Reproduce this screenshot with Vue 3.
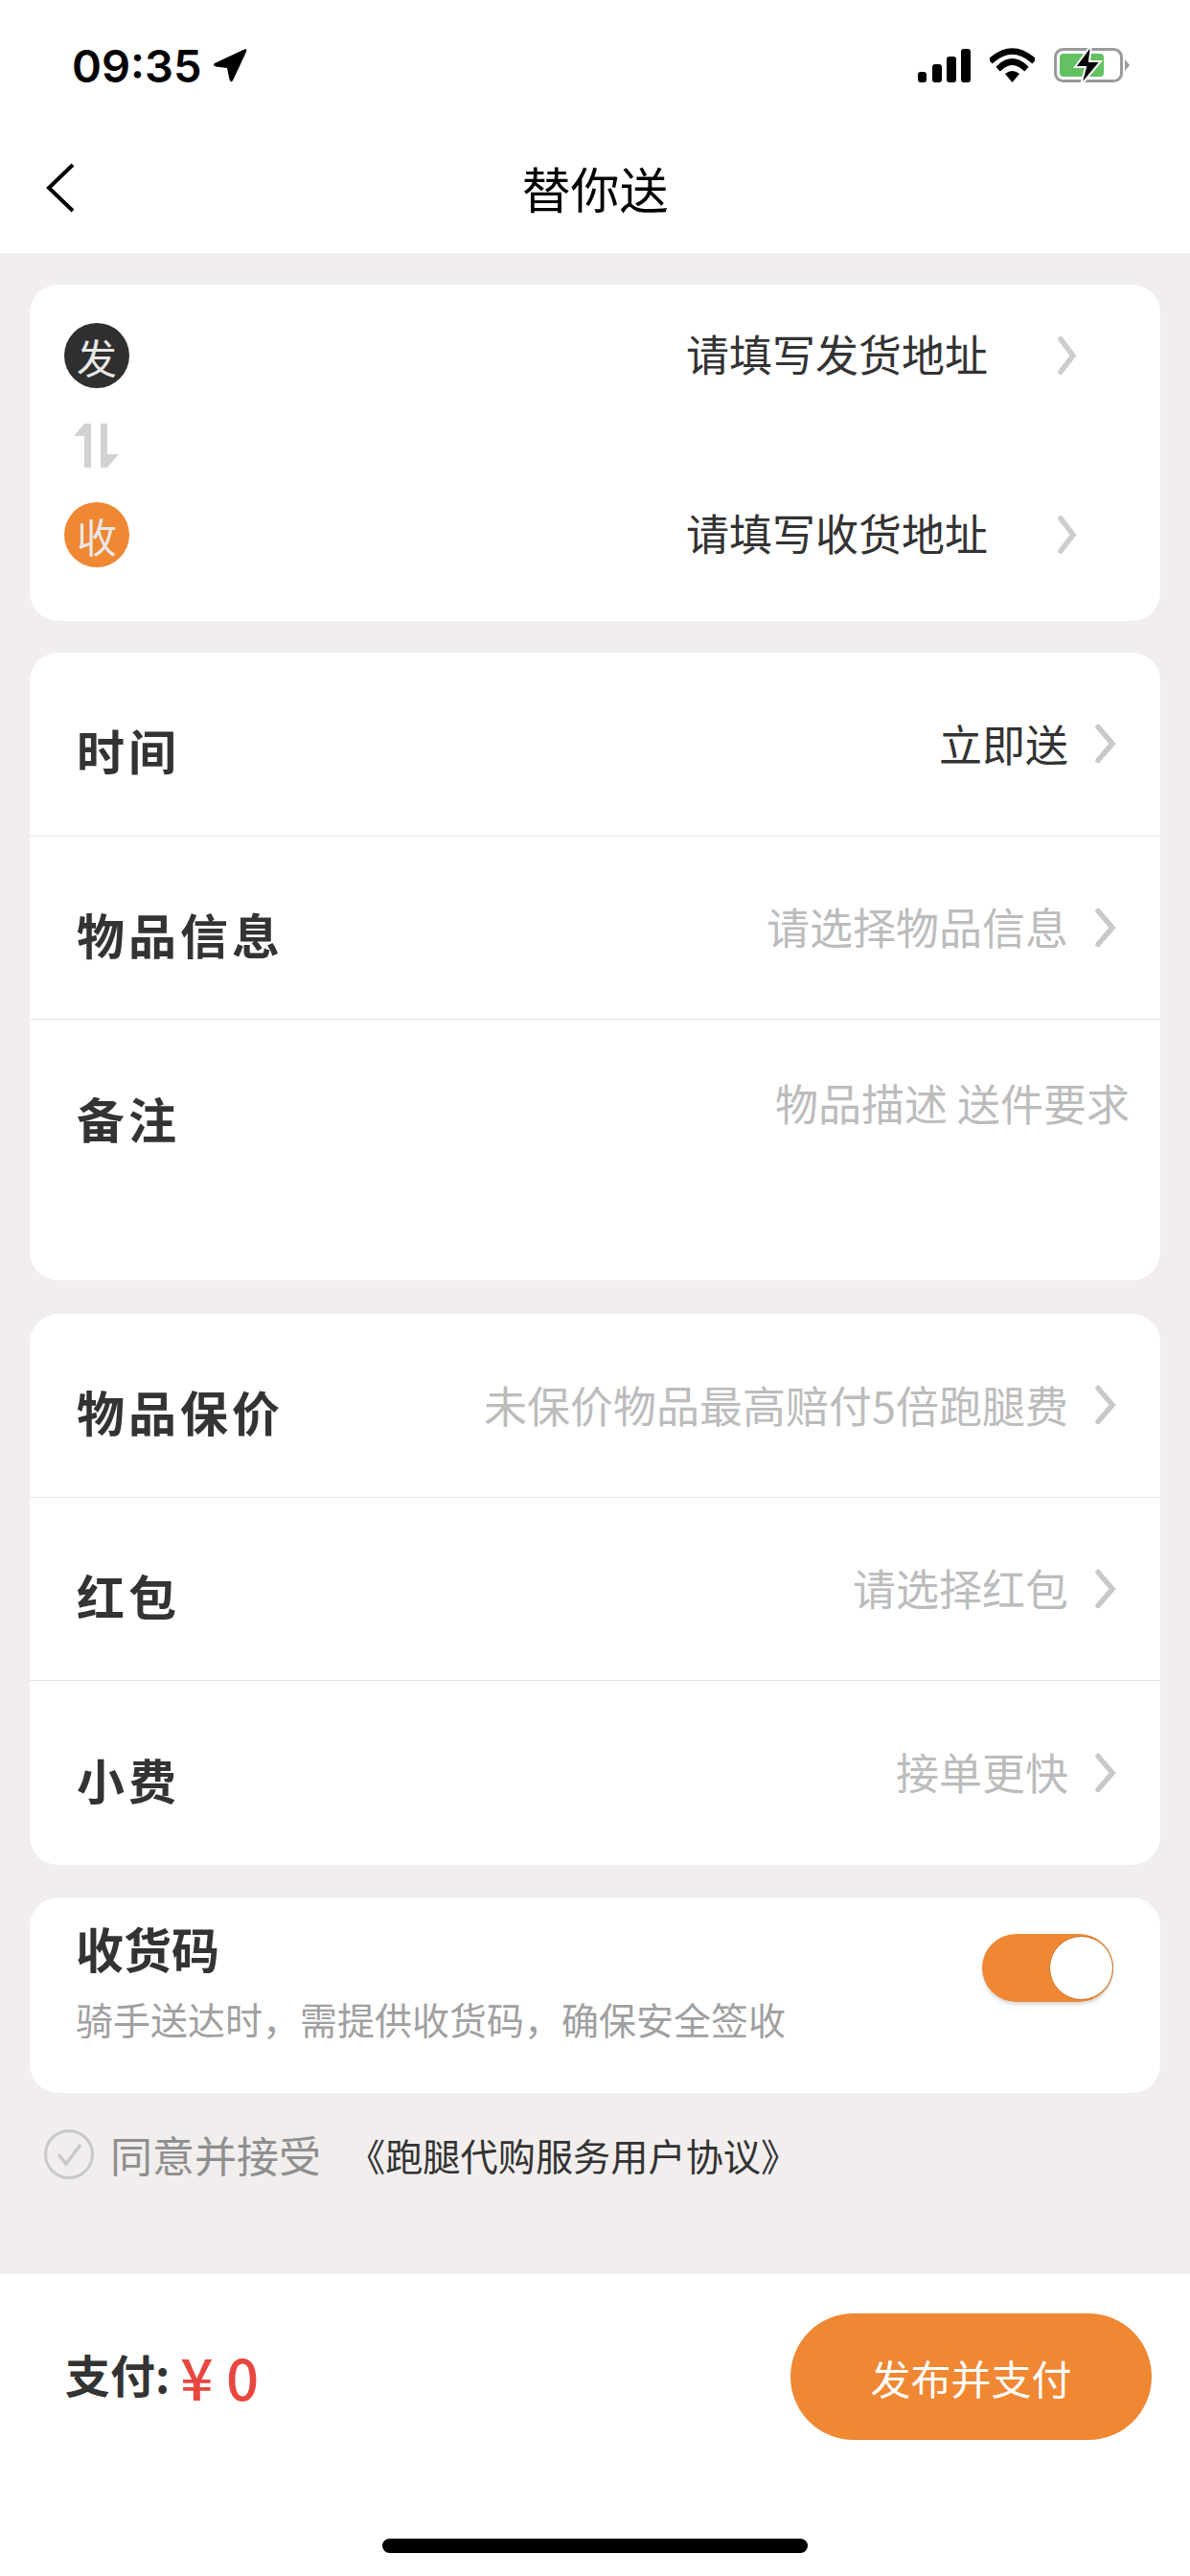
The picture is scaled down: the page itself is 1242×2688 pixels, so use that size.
<template>
  <div class="page">
    <div class="status-bar">
      <div class="status-time">
        <span>09:35</span>
        <svg class="loc-icon" width="38" height="38" viewBox="0 0 38 38">
          <path d="M3 17 L34 2.500 Q37 1.500 36 5 L22 35 Q20 38 18.500 34 L16 22 L4 20.500 Q0.500 19 3 17 Z" fill="#000" />
        </svg>
      </div>
      <div class="status-icons">
        <svg width="55" height="35" viewBox="0 0 55 35">
          <rect x="0" y="24" width="9" height="11" rx="3" fill="#000" />
          <rect x="15" y="16" width="10" height="19" rx="3" fill="#000" />
          <rect x="30" y="8" width="10" height="27" rx="3" fill="#000" />
          <rect x="45" y="0" width="10" height="35" rx="3" fill="#000" />
        </svg>
        <svg width="47" height="36" viewBox="0 0 47 36">
          <path d="M3 12 Q23.500 -5 44 12" fill="none" stroke="#000" stroke-width="6.500" stroke-linecap="square" />
          <path d="M11 20 Q23.500 9 36 20" fill="none" stroke="#000" stroke-width="6.500" stroke-linecap="square" />
          <path d="M16 27 Q23.500 21 31 27 L23.500 36 Z" fill="#000" />
        </svg>
        <svg width="80" height="42" viewBox="0 0 80 42">
          <rect x="1.500" y="4.500" width="69" height="33" rx="8" fill="#fff" stroke="#9b9b9b" stroke-width="3" />
          <rect x="6" y="9" width="46" height="24" rx="4" fill="#63c063" />
          <path d="M74 15 L79 21 L74 27 Z" fill="#9b9b9b" />
          <path d="M39 0 L22 23 L33 23 L28 42 L49 17 L37 17 Z" fill="#000" stroke="#fff" stroke-width="2" />
        </svg>
      </div>
    </div>

    <header class="nav">
      <svg class="back-icon" width="30" height="52" viewBox="0 0 30 52">
        <path d="M28 2 L3 26 L28 50" fill="none" stroke="#000" stroke-width="4" />
      </svg>
      <h1 class="nav-title">替你送</h1>
      <span></span>
    </header>

    <main class="content">
      <section class="card address-card">
        <div class="address-row">
          <span class="dot dot-dark">发</span>
          <span class="address-text">请填写发货地址</span>
          <svg class="address-chevron" width="20" height="40" viewBox="0 0 20 40">
            <path d="M3 3 L16 20 L3 37" fill="none" stroke="#cdcdcd" stroke-width="5.500" stroke-linecap="round" />
          </svg>
        </div>
        <svg class="swap-icon" width="47" height="46" viewBox="0 0 47 46">
          <path d="M11 0 H18 V46 H11 V13 H0 Z M28 0 H35 V32 H47 L35 46 H28 Z" fill="#d2d2d2" />
        </svg>
        <div class="address-row">
          <span class="dot dot-orange">收</span>
          <span class="address-text">请填写收货地址</span>
          <svg class="address-chevron" width="20" height="40" viewBox="0 0 20 40">
            <path d="M3 3 L16 20 L3 37" fill="none" stroke="#cdcdcd" stroke-width="5.500" stroke-linecap="round" />
          </svg>
        </div>
      </section>

      <section class="card order-card">
        <div v-for="row in orderRows" :key="row.label" class="form-row">
          <span class="form-label">{{ row.label }}</span>
          <span class="form-value" :class="{ filled: row.filled }">{{ row.value }}</span>
          <svg class="row-chevron" width="22" height="42" viewBox="0 0 22 42">
            <path d="M3 3.500 L18 21 L3 38.500" fill="none" stroke="#c8c8c8" stroke-width="5.500" stroke-linecap="round" />
          </svg>
        </div>
        <div class="note-row">
          <span class="form-label">备注</span>
          <span class="note-text">物品描述 送件要求</span>
        </div>
      </section>

      <section class="card fee-card">
        <div v-for="row in feeRows" :key="row.label" class="form-row">
          <span class="form-label">{{ row.label }}</span>
          <span class="form-value">{{ row.value }}</span>
          <svg class="row-chevron" width="22" height="42" viewBox="0 0 22 42">
            <path d="M3 3.500 L18 21 L3 38.500" fill="none" stroke="#c8c8c8" stroke-width="5.500" stroke-linecap="round" />
          </svg>
        </div>
      </section>

      <section class="card code-card">
        <div>
          <div class="code-title">收货码</div>
          <div class="code-desc">骑手送达时&#xFF0C;需提供收货码&#xFF0C;确保安全签收</div>
        </div>
        <div class="toggle"><span class="toggle-knob"></span></div>
      </section>

      <div class="agree">
        <svg width="52" height="52" viewBox="0 0 52 52">
          <circle cx="26" cy="26" r="24.500" fill="none" stroke="#c9c9c9" stroke-width="3" />
          <path d="M15 26 L23 36 L38 16" fill="none" stroke="#c9c9c9" stroke-width="3.500" />
        </svg>
        <span class="agree-text">同意并接受</span>
        <span class="agree-link">《跑腿代购服务用户协议》</span>
      </div>
    </main>

    <footer class="footer">
      <div class="pay-row">
        <div class="pay-total">
          <span class="pay-label">支付:</span>
          <span class="pay-amount">¥ 0</span>
        </div>
        <button class="pay-button">发布并支付</button>
      </div>
      <div class="home-indicator"></div>
    </footer>
  </div>
</template>

<script setup>
const orderRows = [
  { label: '时间', value: '立即送', filled: true },
  { label: '物品信息', value: '请选择物品信息' },
]

const feeRows = [
  { label: '物品保价', value: '未保价物品最高赔付5倍跑腿费' },
  { label: '红包', value: '请选择红包' },
  { label: '小费', value: '接单更快' },
]
</script>

<style scoped>
.page {
  display: flex;
  flex-direction: column;
  height: 2688px;
  background: #f1eeed;
  color: #333;
  font-family: "Noto Sans CJK SC", "Liberation Sans", sans-serif;
}

.status-bar {
  display: flex;
  align-items: center;
  justify-content: space-between;
  height: 136px;
  padding: 0 62px 0 75px;
  background: #fff;
  box-sizing: border-box;
}

.status-time {
  display: flex;
  align-items: center;
  gap: 10px;
  font-family: Inter, "Liberation Sans", sans-serif;
  font-size: 47px;
  font-weight: 600;
  color: #000;
}

.status-icons {
  display: flex;
  align-items: center;
  gap: 20px;
}

.nav {
  display: grid;
  grid-template-columns: 1fr auto 1fr;
  align-items: center;
  height: 128px;
  padding: 0 48px 8px;
  background: #fff;
  box-sizing: border-box;
}

.nav-title {
  margin: 0;
  font-size: 51px;
  font-weight: 400;
  color: #000;
}

.content {
  flex: 1;
  display: flex;
  flex-direction: column;
  padding: 33px 31px 0;
}

.card {
  background: #fff;
  border-radius: 30px;
  overflow: hidden;
}

.order-card {
  margin-top: 33px;
}

.fee-card {
  margin-top: 35px;
}

.code-card {
  margin-top: 34.500px;
}

.address-card {
  display: flex;
  flex-direction: column;
  height: 351px;
  padding: 40px 87px 0 36px;
  box-sizing: border-box;
}

.address-row {
  display: flex;
  align-items: center;
  height: 68px;
}

.dot {
  display: flex;
  align-items: center;
  justify-content: center;
  width: 68px;
  height: 68px;
  border-radius: 50%;
  color: #e8e8e8;
  font-size: 42px;
}

.dot-dark {
  background: #2f2f2f;
}

.dot-orange {
  background: #ef8733;
}

.address-text {
  margin-left: auto;
  margin-bottom: 6px;
  font-size: 45px;
  color: #333;
}

.address-chevron {
  margin-left: 73px;
}

.swap-icon {
  margin: 37px 0 36px 10px;
}

.form-row {
  display: flex;
  align-items: center;
  height: 191.500px;
  padding: 0 46px 0 49px;
  border-bottom: 1px solid #e6e6e6;
  box-sizing: border-box;
}

.form-row:last-child {
  border-bottom: 0;
}

.form-label {
  position: relative;
  top: 6px;
  font-size: 50px;
  font-weight: 700;
  letter-spacing: 4px;
  color: #333;
}

.form-value {
  margin-left: auto;
  margin-bottom: 2px;
  font-size: 45px;
  color: #bcbcbc;
}

.form-value.filled {
  color: #333;
}

.row-chevron {
  margin-left: 28px;
}

.note-row {
  display: flex;
  justify-content: space-between;
  height: 272px;
  padding: 54px 32px 0 49px;
  box-sizing: border-box;
}

.note-row .form-label {
  top: 12px;
  height: 74px;
}

.note-text {
  font-size: 45px;
  color: #bcbcbc;
}

.code-card {
  display: flex;
  justify-content: space-between;
  height: 204px;
  padding: 16px 49px 0 48px;
  box-sizing: border-box;
}

.code-title {
  font-size: 50px;
  font-weight: 700;
  line-height: 72px;
  color: #333;
}

.code-desc {
  margin-top: 10px;
  font-size: 39px;
  line-height: 56px;
  color: #a0a0a0;
}

.toggle {
  position: relative;
  width: 137px;
  height: 71px;
  margin-top: 22px;
  border-radius: 36px;
  background: #ef8733;
  box-shadow: 0 3px 3px rgba(120, 120, 120, 0.25);
}

.toggle-knob {
  position: absolute;
  top: 2px;
  right: 0;
  width: 67px;
  height: 67px;
  border-radius: 50%;
  background: #fff;
  border: 1px solid #c97428;
  box-sizing: border-box;
}

.agree {
  display: flex;
  align-items: center;
  margin-top: 32px;
  padding-left: 15px;
}

.agree-text {
  margin-left: 17px;
  font-size: 44px;
  color: #8f8f8f;
}

.agree-link {
  margin-left: 28px;
  font-size: 39.200px;
  color: #333;
}

.footer {
  display: flex;
  flex-direction: column;
  align-items: center;
  height: 315px;
  padding-top: 41px;
  background: #fff;
  box-sizing: border-box;
}

.pay-row {
  display: flex;
  align-items: center;
  justify-content: space-between;
  align-self: stretch;
  padding: 0 40px 0 68px;
}

.pay-total {
  display: flex;
  align-items: center;
}

.pay-label {
  margin-bottom: 8px;
  font-size: 47px;
  font-weight: 700;
  color: #333;
}

.pay-amount {
  margin-left: 11px;
  margin-bottom: 4px;
  font-size: 60px;
  font-weight: 500;
  color: #e8473f;
  font-family: "Noto Sans CJK SC", sans-serif;
}

.pay-button {
  width: 377px;
  height: 132px;
  border: 0;
  border-radius: 66px;
  background: #ef8733;
  color: #fff;
  font-family: inherit;
  font-size: 42px;
}

.home-indicator {
  width: 444px;
  height: 15px;
  margin-top: 103px;
  border-radius: 8px;
  background: #000;
}
</style>
